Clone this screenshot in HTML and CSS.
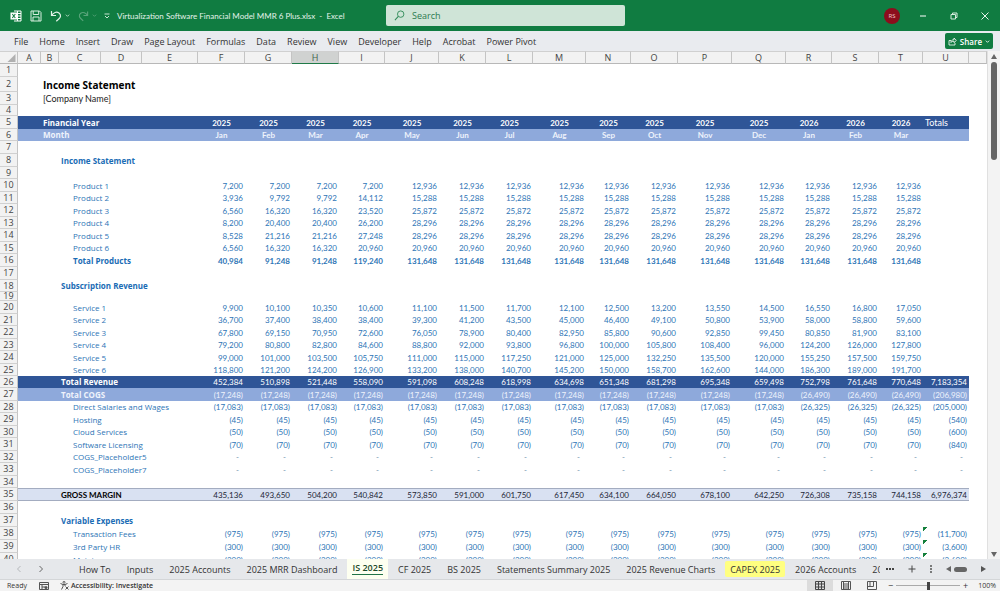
FILE: index.html
```html
<!DOCTYPE html>
<html lang="en">
<head>
<meta charset="utf-8">
<meta name="viewport" content="width=device-width, initial-scale=1">
<title>Virtualization Software Financial Model MMR 6 Plus.xlsx - Excel</title>
<link rel="stylesheet" href="styles.css">
</head>
<body>
<header class="titlebar">
  <div class="quick">
    <svg class="logo" viewBox="0 0 12 12" width="12" height="12" aria-hidden="true"><path d="M4 1h7v10H4M4 3.500h7M4 6h7M4 8.500h7M7.500 1v10" fill="none" stroke="#fff" stroke-width="1"/><rect x="0.500" y="2.500" width="6.500" height="7" fill="#fff"/><path d="M2.300 4l3 4M5.300 4l-3 4" stroke="#107c41" stroke-width="1.100"/></svg>
    <button class="tool" aria-label="Save"><svg viewBox="0 0 12 12" width="12" height="12"><path d="M1 1h8.500L11 2.500V11H1zM3.200 1v3.500h5.500V1M3 11V7h6v4" fill="none" stroke="#d9efe1"/></svg></button>
    <button class="tool" aria-label="Undo"><svg viewBox="0 0 12 12" width="12" height="12"><path d="M1.500 1v4.500H6M1.700 5.300C3.500 2.500 6.500 1.300 9 3c2.500 2 1.500 4.300 0 5.700L6.300 11.300" fill="none" stroke="#e3f3e9" stroke-width="1.200"/></svg></button>
    <button class="tool caret" aria-label="Undo history"><svg viewBox="0 0 6 6" width="5" height="5"><path d="M1 2l2 2 2-2" fill="none" stroke="#c5e3d0"/></svg></button>
    <button class="tool dim" aria-label="Redo"><svg viewBox="0 0 12 12" width="11" height="12"><path d="M10.500 1v4.500H6M10.300 5.300C8.500 2.500 5.500 1.300 3 3 .500 5 1.500 7.300 3 8.700l2.700 2.600" fill="none" stroke="#fff" stroke-width="1.200"/></svg></button>
    <button class="tool caret dim" aria-label="Redo history"><svg viewBox="0 0 6 6" width="5" height="5"><path d="M1 2l2 2 2-2" fill="none" stroke="#fff"/></svg></button>
    <button class="tool more" aria-label="Customize toolbar"><svg viewBox="0 0 6 6" width="6" height="6"><path d="M.500 1h5M1 3l2 2 2-2" fill="none" stroke="#c5e3d0"/></svg></button>
    <span class="filename">Virtualization Software Financial Model MMR 6 Plus.xlsx &nbsp;-&nbsp; Excel</span>
  </div>
  <label class="search">
    <svg viewBox="0 0 12 12" width="11" height="11" aria-hidden="true"><circle cx="7.300" cy="4.500" r="3.500" fill="none" stroke="#2f8a58"/><path d="M4.700 7L1 11" stroke="#2f8a58" stroke-width="1.100"/></svg>
    <input type="text" placeholder="Search" aria-label="Search">
  </label>
  <div class="window">
    <button class="avatar" aria-label="Account">RS</button>
    <button class="win" aria-label="Minimize"><svg viewBox="0 0 8 8" width="8" height="8"><path d="M1 4h6" stroke="#fff"/></svg></button>
    <button class="win" aria-label="Restore"><svg viewBox="0 0 8 8" width="8" height="8"><path d="M1 2.500h4.500V7H1zM2.500 2.500V1H7v4.500H5.500" fill="none" stroke="#d5ecdd"/></svg></button>
    <button class="win" aria-label="Close"><svg viewBox="0 0 8 8" width="8" height="8"><path d="M.500.500l7 7M7.500.500l-7 7" stroke="#e6f4eb"/></svg></button>
  </div>
</header>
<nav class="menu">
  <button>File</button><button>Home</button><button>Insert</button><button>Draw</button><button>Page Layout</button><button>Formulas</button><button>Data</button><button>Review</button><button>View</button><button>Developer</button><button>Help</button><button>Acrobat</button><button>Power Pivot</button>
  <button class="share"><svg viewBox="0 0 9 9" width="9" height="9" aria-hidden="true"><path d="M3 3.500H1V8h6V6M2.800 5.500C3 3.500 4.300 2.700 6 2.700V1l2.300 2.500L6 5.700V4.200c-1.500 0-2.500.400-3.200 1.300z" fill="none" stroke="#fff" stroke-width=".8"/></svg>Share<svg viewBox="0 0 6 6" width="5" height="5" aria-hidden="true"><path d="M1 2l2 2 2-2" fill="none" stroke="#fff"/></svg></button>
</nav>
<main class="workspace">
  <div class="gridwrap"><table class="grid" id="grid"></table></div>
  <div class="vscroll">
    <svg viewBox="0 0 6 5" width="6" height="5"><path d="M3 0l3 5H0z" fill="#666"/></svg>
    <div class="vtrack"><div class="vthumb"></div></div>
    <svg viewBox="0 0 6 5" width="6" height="5"><path d="M3 5l3-5H0z" fill="#666"/></svg>
  </div>
</main>
<nav class="tabs">
  <div class="tabnav">
    <button aria-label="Previous sheet"><svg viewBox="0 0 6 8" width="6" height="8"><path d="M4.500 1l-3 3 3 3" fill="none" stroke="#b5b8bb"/></svg></button>
    <button aria-label="Next sheet"><svg viewBox="0 0 6 8" width="6" height="8"><path d="M1.500 1l3 3-3 3" fill="none" stroke="#666"/></svg></button>
  </div>
  <div class="tablist">
    <button>How To</button><button>Inputs</button><button>2025 Accounts</button><button>2025 MRR Dashboard</button><button class="active"><span>IS 2025</span></button><button>CF 2025</button><button>BS 2025</button><button>Statements Summary 2025</button><button>2025 Revenue Charts</button><button class="capex">CAPEX 2025</button><button>2026 Accounts</button><button>2026 MRR Dashboard</button>
  </div>
  <div class="tabtools">
    <button aria-label="More sheets"><svg viewBox="0 0 8 8" width="8" height="8"><path d="M0 4h2M3 4h2M6 4h2" stroke="#444" stroke-width="2"/></svg></button>
    <button aria-label="New sheet"><svg viewBox="0 0 8 8" width="8" height="8"><path d="M.500 4h7M4 .500v7" stroke="#444"/></svg></button>
    <button aria-label="Resize"><svg viewBox="0 0 2 8" width="2" height="8"><path d="M1 0v2M1 3v2M1 6v2" stroke="#555" stroke-width="1.500"/></svg></button>
    <div class="hscroll">
      <svg viewBox="0 0 5 6" width="5" height="6"><path d="M0 3l5-3v6z" fill="#666"/></svg>
      <span class="hthumb"></span>
      <svg viewBox="0 0 5 6" width="5" height="6"><path d="M5 3L0 0v6z" fill="#555"/></svg>
    </div>
  </div>
</nav>
<footer class="status">
  <span class="ready">Ready</span>
  <svg viewBox="0 0 10 8" width="10" height="8" aria-hidden="true"><path d="M.500.500h9v7h-9zM.500 2.500h9M3 2.500v5M3 5h3" fill="none" stroke="#555"/><circle cx="7" cy="5.500" r="1.500" fill="#555"/></svg>
  <button class="access"><svg viewBox="0 0 9 9" width="9" height="9" aria-hidden="true"><circle cx="4" cy="1.300" r="1" fill="none" stroke="#444" stroke-width=".8"/><path d="M.500 2.500L3 3.500v2L1.500 8.500M7.500 2.500L5 3.500v1.500M3 3.500h2M5.500 5.500l3 3M8.500 5.500l-3 3" fill="none" stroke="#444" stroke-width=".9"/></svg>Accessibility: Investigate</button>
  <div class="views">
    <button class="view on" aria-label="Normal view"><svg viewBox="0 0 10 9" width="10" height="9"><path d="M.500.500h9v8h-9zM.500 3h9M.500 6h9M3.500.500v8M6.500.500v8" fill="none" stroke="#444"/></svg></button>
    <button class="view" aria-label="Page layout view"><svg viewBox="0 0 10 9" width="10" height="9"><path d="M.500.500h9v8h-9zM2.500 1v7M7.500 1v7M2.500 3h5M2.500 5h5M2.500 7h5" fill="none" stroke="#555"/></svg></button>
    <button class="view" aria-label="Page break preview"><svg viewBox="0 0 10 9" width="10" height="9"><path d="M.500.500h9v8h-9zM3 .500v5H.500M3 5.500h3.500v-5" fill="none" stroke="#555"/></svg></button>
    <span class="sign">−</span>
    <input class="zoom" type="range" min="0" max="200" value="100" aria-label="Zoom">
    <span class="sign">+</span>
    <span class="percent">100%</span>
  </div>
</footer>
<script src="sheet.js"></script>
</body>
</html>
```

FILE: styles.css
```css
* { box-sizing: border-box; }
body {
  margin: 0;
  height: 100vh;
  display: flex;
  flex-direction: column;
  overflow: hidden;
  font-family: "Open Sans", "Noto Sans", sans-serif;
  font-size: 9px;
  color: #333;
  background: #fff;
}
button, input { font: inherit; color: inherit; margin: 0; padding: 0; border: 0; background: none; }
button { white-space: nowrap; }
svg { display: block; flex: none; }

.titlebar {
  flex: none;
  height: 31px;
  display: grid;
  grid-template-columns: 386px minmax(100px, 239px) 1fr;
  align-items: center;
  background: #107c41;
  color: #e4f3ea;
}
.quick { display: flex; align-items: center; padding-left: 10px; }
.tool { margin-left: 8px; }
.tool.caret { margin-left: 3px; }
.tool.more { margin-left: 7px; }
.dim { opacity: .3; }
.filename { margin-left: 7px; font-family: Lato, sans-serif; font-size: 8px; white-space: nowrap; }
.search {
  display: flex;
  align-items: center;
  gap: 7px;
  height: 21px;
  padding-left: 8px;
  background: #cfe4d7;
  border-radius: 2px;
}
.search input { flex: 1; min-width: 0; outline: 0; }
.search input::placeholder { color: #2c7a50; opacity: 1; }
.window { display: flex; justify-content: flex-end; align-items: center; padding-right: 11px; }
.avatar { width: 16px; height: 16px; border-radius: 50%; background: #8c0d1c; color: #f0c8cc; font-size: 6px; }
.win { margin-left: 23px; }
.avatar + .win { margin-left: 19px; }

.menu {
  flex: none;
  height: 20px;
  display: flex;
  align-items: center;
  gap: 11px;
  padding: 0 7px 0 14px;
  background: #e9ebef;
}
.menu .share {
  margin-left: auto;
  display: flex;
  align-items: center;
  gap: 3px;
  height: 16px;
  padding: 0 3px;
  border-radius: 2px;
  background: #107c41;
  color: #fff;
  font-size: 8px;
  font-weight: 600;
}

.workspace { flex: 1; min-height: 0; display: flex; }
.gridwrap { flex: 1; min-width: 0; overflow: hidden; }
.grid {
  width: 100%;
  table-layout: fixed;
  border-collapse: separate;
  border-spacing: 0;
  font-family: Lato, "Liberation Sans", sans-serif;
  font-size: 8px;
  line-height: 10px;
  color: #2e75b6;
}
.grid td, .grid th { padding: 0 2px; white-space: nowrap; font-weight: 400; text-align: left; vertical-align: middle; }
.grid thead th {
  height: 13px;
  padding: 0;
  text-align: center;
  font-family: "Open Sans", sans-serif;
  font-size: 9px;
  color: #444;
  background: #f2f2f2;
  border-top: 1px solid #d0d0d0;
  border-right: 1px solid #c4c4c4;
  border-bottom: 1px solid #b8b8b8;
}
.grid thead th.selected { background: #d0d2d1; border-bottom: 1px solid #207a48; color: #42644f; }
.grid thead th.corner { padding-left: 7px; }
.grid tbody th {
  padding: 0;
  text-align: center;
  font-family: "Open Sans", sans-serif;
  font-size: 9px;
  color: #444;
  background: #f2f2f2;
  border-right: 1px solid #c4c4c4;
  border-bottom: 1px solid #d0d0d0;
}
.h9 > * { height: 9px; line-height: 8px; }
.h11 > * { height: 11px; } .h12 > * { height: 12px; }
.h13 > * { height: 13px; } .h15 > * { height: 15px; }
.grid td.name { font-family: "Open Sans", sans-serif; }
.grid td.num { text-align: right; }
.grid td.mid { text-align: center; }
.grid td.caption { font-size: 9px; }
.grid td.indent { padding-left: 14px; }
.grid td.dash { padding-right: 6px; color: #6c8cad; }
.bold td { font-weight: 700; }
.bold td:not(.num) { color: #1a6cb5; }
.title td { font-size: 10px; font-weight: 700; color: #000; }
.grid .sub td.name { font-family: Lato, sans-serif; font-size: 9px; color: #222; }
.dark td:not(.rest) { background: #2f5597; color: #fff; }
.light td:not(.rest) { background: #8ea9db; color: #eef3fc; }
.dark td.mid, .light td.mid, .dark td.name, .light td.name, .gross td.name { font-weight: 700; }
.gross td:not(.rest) { background: #d9e1f2; color: #1c2536; border-top: 1px solid #a3acc0; border-bottom: 1px solid #a3acc0; }
.grid .gross td.name { font-family: Lato, sans-serif; color: #000; }
.grid td.flag { background: linear-gradient(135deg, #14803c 3px, transparent 3px) no-repeat; }

.vscroll { flex: none; width: 13px; display: flex; flex-direction: column; align-items: center; gap: 1px; padding: 3px 0 2px; background: #f3f3f3; border-left: 1px solid #e0e0e0; }
.vtrack { flex: 1; width: 6px; padding-top: 2px; }
.vthumb { height: 20%; border-radius: 3px; background: #666; }

.tabs { flex: none; height: 21px; display: flex; background: #e6e8eb; border-bottom: 1px solid #d4d6d8; font-size: 9px; }
.tabnav { flex: none; width: 71px; display: flex; align-items: center; gap: 16px; padding-left: 16px; }
.tablist { flex: 1; min-width: 0; display: flex; overflow: hidden; }
.tablist button { flex: none; padding: 0 8px; }
.tablist .active { padding: 0 5px 2px; margin: 0 2px; background: #fdfff0; font-weight: 600; color: #1d4a2b; }
.active span { display: block; line-height: 13px; border-bottom: 1px solid #217346; }
.tablist .capex { margin: 2px; padding: 0 5px; background: #ffff80; border-radius: 2px; }
.tabtools { flex: none; display: flex; align-items: center; gap: 14px; padding: 0 14px 0 6px; }
.hscroll { display: flex; align-items: center; gap: 3px; }
.hthumb { width: 13px; height: 5px; margin-right: 11px; border-radius: 3px; background: #666; }

.status { flex: none; height: 11px; display: flex; align-items: center; padding: 0 4px 0 7px; background: #f3f3f3; font-size: 7px; line-height: 11px; }
.ready { margin-right: 12px; }
.access { display: flex; align-items: center; gap: 2px; margin-left: 11px; font-weight: 600; }
.views { margin-left: auto; display: flex; align-items: center; }
.view { width: 26px; height: 11px; display: flex; justify-content: center; align-items: center; }
.view.on { background: #dcdcdc; }
.sign { margin: 0 3px; font-size: 9px; }
.zoom { width: 64px; height: 9px; appearance: none; background: linear-gradient(#aaa, #aaa) center / 100% 1px no-repeat; }
.zoom::-webkit-slider-thumb { appearance: none; width: 3px; height: 8px; background: #444; }
.percent { margin-left: 7px; }
```

FILE: sheet.js
```js
const widths = [18, 23, 18, 42, 41, 56, 47, 47, 47, 46, 54, 47, 47, 53, 45, 47, 54, 54, 46, 47, 44, 46];
const names = "ABCDEFGHIJKLMNOPQRSTU";
const months = "Jan Feb Mar Apr May Jun Jul Aug Sep Oct Nov Dec Jan Feb Mar".split(" ");
const fmt = n => n === 0 ? "-" : n < 0 ? "(" + (-n).toLocaleString("en-US") + ")" : n.toLocaleString("en-US");
const fill = (a, b = a) => months.map((m, i) => i < 12 ? a : b);
const ramp = (first, steady) => months.map((m, i) => i < 4 ? first[i] : steady);

const products = [
  ramp([7200, 7200, 7200, 7200], 12936),
  ramp([3936, 9792, 9792, 14112], 15288),
  ramp([6560, 16320, 16320, 23520], 25872),
  ramp([8200, 20400, 20400, 26200], 28296),
  ramp([8528, 21216, 21216, 27248], 28296),
  ramp([6560, 16320, 16320, 20960], 20960)
];
const services = [
  [9900, 10100, 10350, 10600, 11100, 11500, 11700, 12100, 12500, 13200, 13550, 14500, 16550, 16800, 17050],
  [36700, 37400, 38400, 38400, 39300, 41200, 43500, 45000, 46400, 49100, 50800, 53900, 58000, 58800, 59600],
  [67800, 69150, 70950, 72600, 76050, 78900, 80400, 82950, 85800, 90600, 92850, 99450, 80850, 81900, 83100],
  [79200, 80800, 82800, 84600, 88800, 92000, 93800, 96800, 100000, 105800, 108400, 96000, 124200, 126000, 127800],
  [99000, 101000, 103500, 105750, 111000, 115000, 117250, 121000, 125000, 132250, 135500, 120000, 155250, 157500, 159750],
  [118800, 121200, 124200, 126900, 133200, 138000, 140700, 145200, 150000, 158700, 162600, 144000, 186300, 189000, 191700]
];
const revenue = [452384, 510898, 521448, 558090, 591098, 608248, 618998, 634698, 651348, 681298, 695348, 659498, 752798, 761648, 770648];
const gross = [435136, 493650, 504200, 540842, 573850, 591000, 601750, 617450, 634100, 664050, 678100, 642250, 726308, 735158, 744158];
const total = [40984, 91248, 91248, 119240].concat(Array(11).fill(131648));

// Each row: height, kind, label, label column (2 = B, 3 = C, 4 = C indented), values, total
const rows = [
  [13], [15, "title", "Income Statement", 2], [13, "sub", "[Company Name]", 2], [11],
  [13, "dark", "Financial Year", 2, months.map((m, i) => i < 12 ? "2025" : "2026"), "Totals"],
  [12, "light", "Month", 2, months, ""],
  [13], [13, "bold", "Income Statement", 3], [12],
  ...products.map((p, i) => [i % 2 ? 12 : 13, "", "Product " + (i + 1), 4, p]),
  [13, "bold", "Total Products", 4, total],
  [13], [12, "bold", "Subscription Revenue", 3], [9],
  ...services.map((s, i) => [i % 2 ? 12 : 13, "", "Service " + (i + 1), 4, s]),
  [12, "dark", "Total Revenue", 3, revenue, 7183354],
  [13, "light", "Total COGS", 3, fill(-17248, -26490), -206980],
  [12, "", "Direct Salaries and Wages", 4, fill(-17083, -26325), -205000],
  [13, "", "Hosting", 4, fill(-45), -540],
  [12, "", "Cloud Services", 4, fill(-50), -600],
  [13, "", "Software Licensing", 4, fill(-70), -840],
  [12, "", "COGS_Placeholder5", 4, fill(0), 0],
  [13, "", "COGS_Placeholder7", 4, fill(0), 0],
  [12],
  [13, "gross", "GROSS MARGIN", 3, gross, 6976374],
  [13], [13, "bold", "Variable Expenses", 3],
  [13, "flagged", "Transaction Fees", 4, fill(-975), -11700],
  [13, "flagged", "3rd Party HR", 4, fill(-300), -3600],
  [13, "flagged", "Maintenance", 4, fill(-300), -3600]
];

function cell(v) {
  if (typeof v === "string") return `<td class="mid">${v}</td>`;
  return `<td class="num${v === 0 ? " dash" : ""}">${fmt(v)}</td>`;
}

function row([h, kind = "", label, col, values, sum], i) {
  let html = `<tr class="h${h} ${kind}"><th scope="row">${i + 1}</th>`;
  if (!label) return html + `<td colspan="22"></td></tr>`;
  html += col === 2
    ? `<td></td><td class="name" colspan="4">${label}</td>`
    : `<td></td><td></td><td class="name${col === 4 ? " indent" : ""}" colspan="3">${label}</td>`;
  if (!values) return html + `<td class="rest" colspan="17"></td></tr>`;
  html += values.map(cell).join("");
  if (sum === undefined) html += "<td></td>";
  else if (typeof sum === "string") html += `<td class="caption">${sum}</td>`;
  else html += cell(sum).replace('class="num', `class="${kind === "flagged" ? "flag " : ""}num`);
  return html + `<td class="rest"></td></tr>`;
}

document.getElementById("grid").innerHTML =
  "<colgroup>" + widths.map(w => `<col style="width:${w}px">`).join("") + "<col></colgroup>" +
  `<thead><tr><th class="corner"><svg viewBox="0 0 8 8" width="9" height="8"><path d="M8 0v8H0z" fill="#b0b0b0"/></svg></th>` +
  [...names].map(n => `<th scope="col"${n === "H" ? ' class="selected"' : ""}>${n}</th>`).join("") +
  "<th></th></tr></thead><tbody>" + rows.map(row).join("") + "</tbody>";
```
